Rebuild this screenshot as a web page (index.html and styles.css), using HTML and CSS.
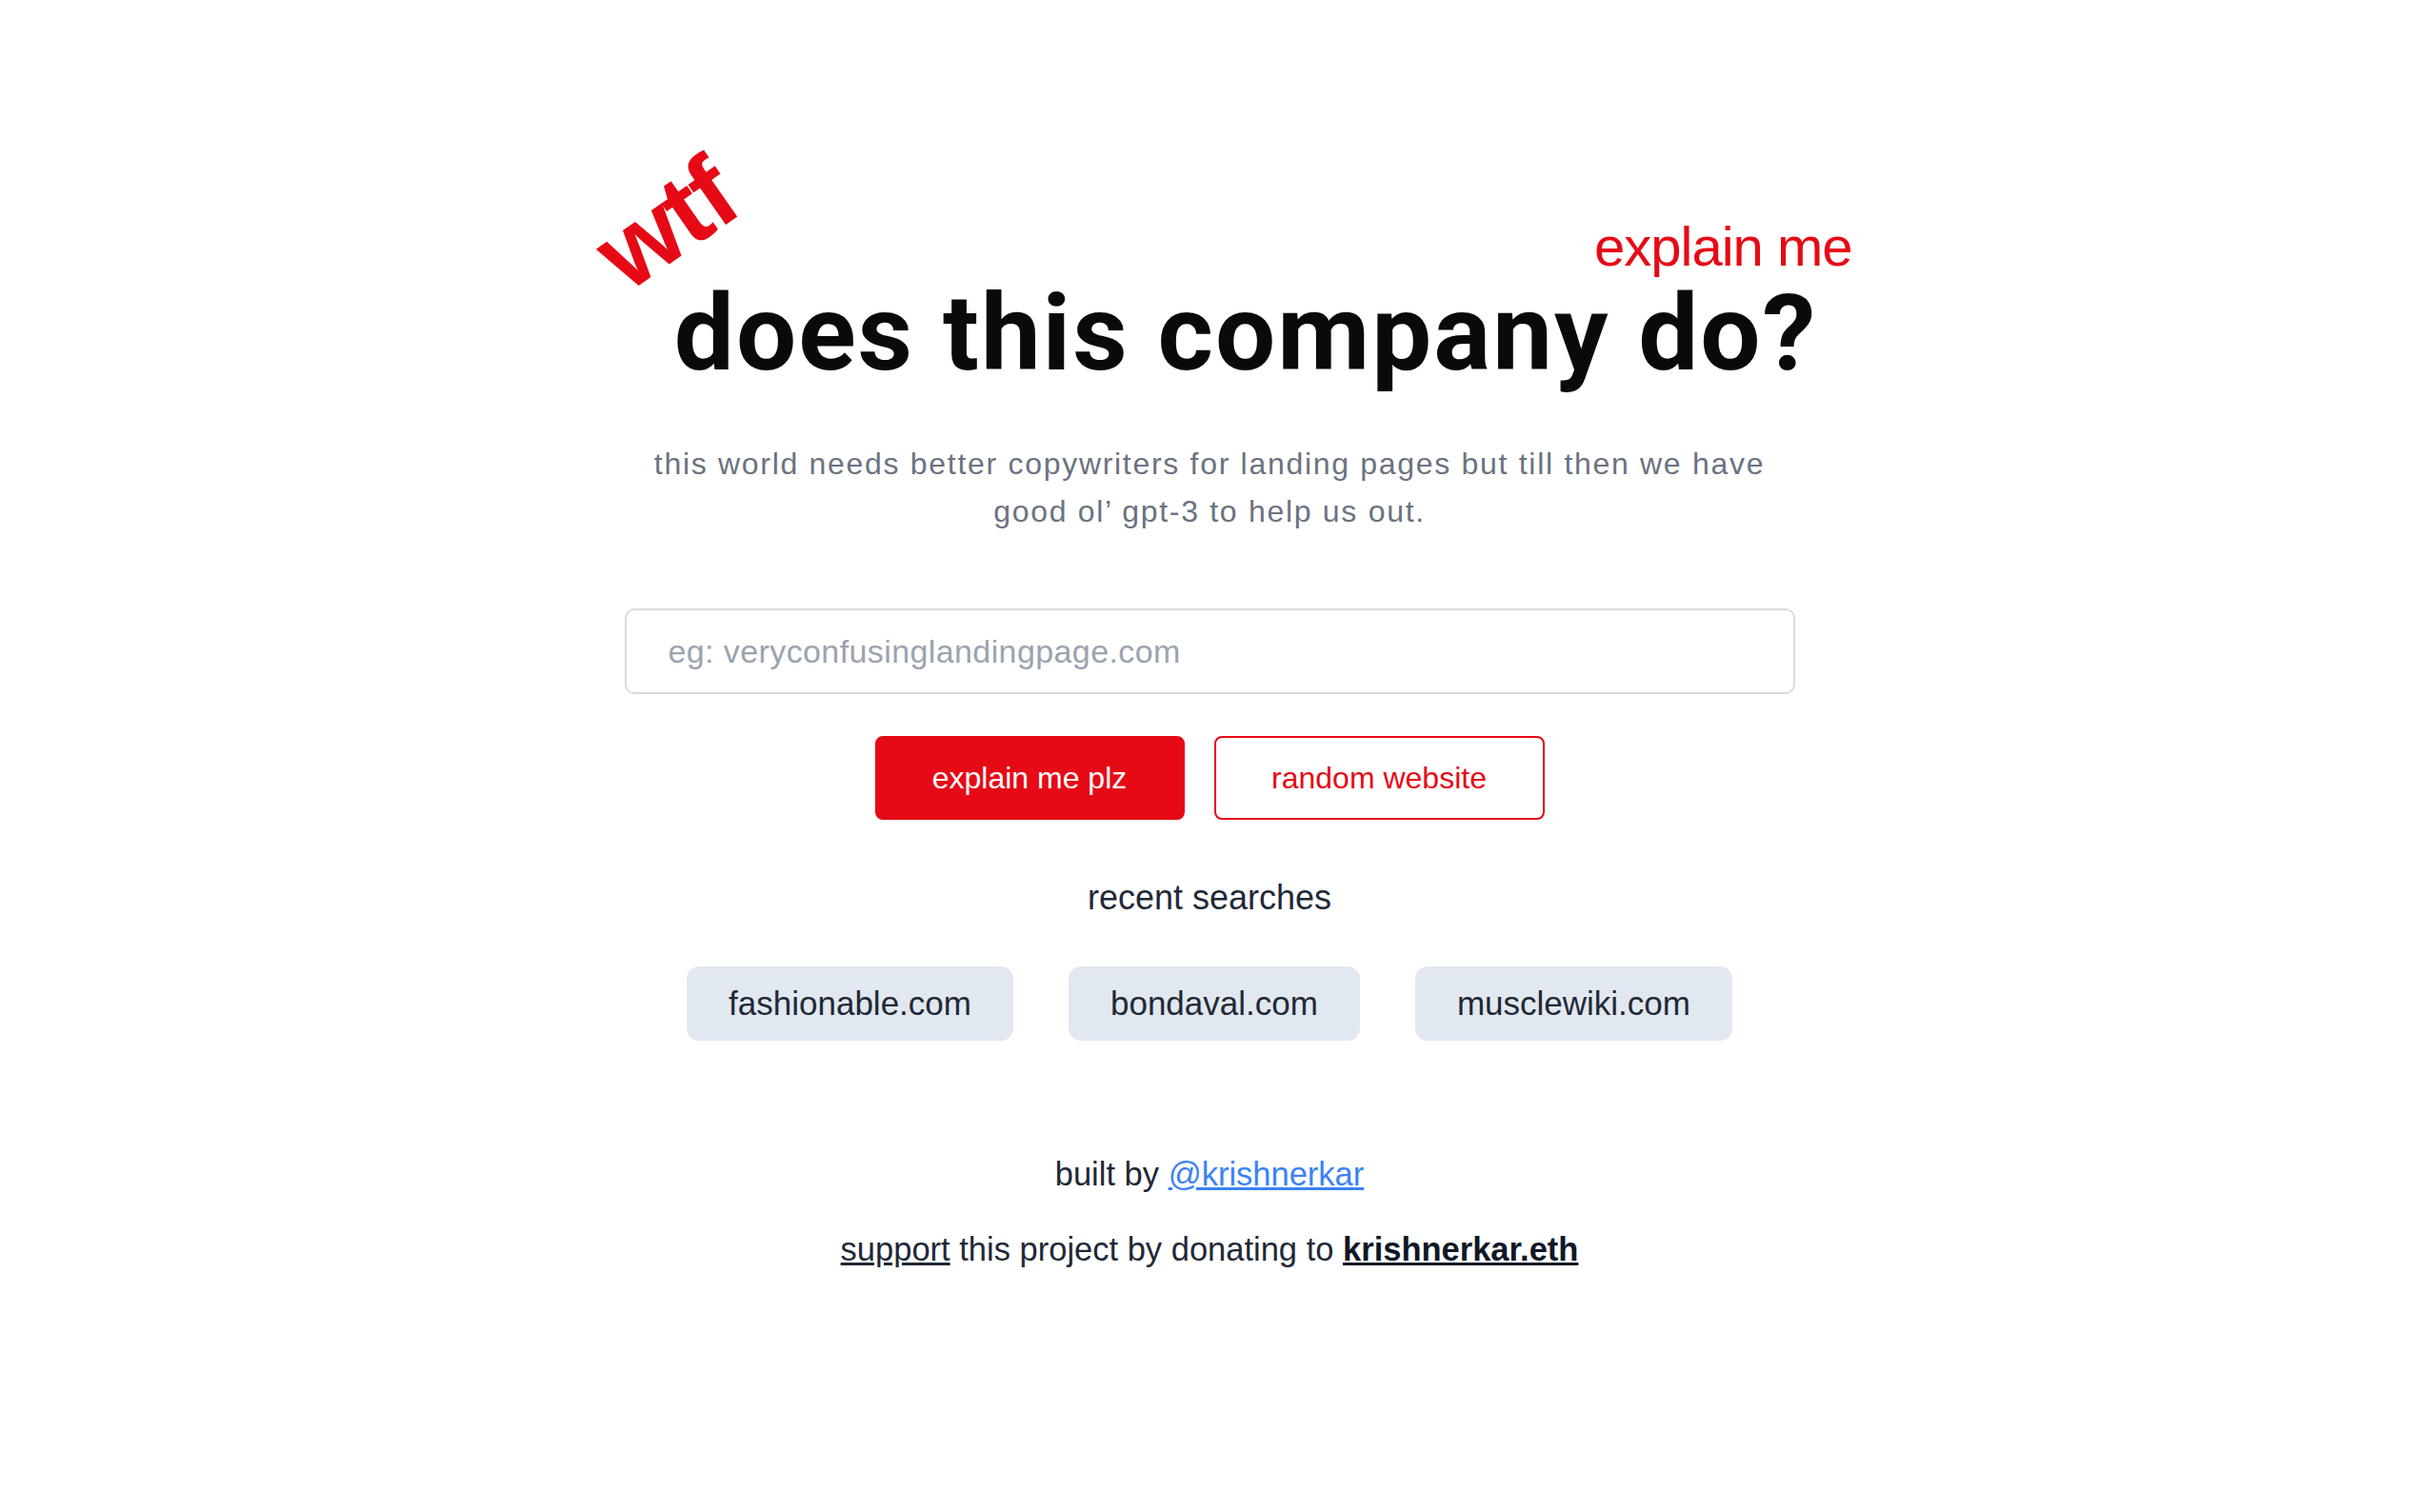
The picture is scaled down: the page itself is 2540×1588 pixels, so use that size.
FILE: index.html
```html
<!DOCTYPE html>
<html lang="en">
<head>
<meta charset="utf-8">
<title>wtf does this company do?</title>
<link rel="stylesheet" href="styles.css">
</head>
<body>
<main class="page">
  <div class="title">
    <span class="wtf">wtf</span>
    <span class="explain">explain me</span>
    <h1 class="headline">does this company do?</h1>
  </div>
  <p class="subtitle">this world needs better copywriters for landing pages but till then we have<br>good ol’ gpt-3 to help us out.</p>
  <input class="url-input" type="text" placeholder="eg: veryconfusinglandingpage.com">
  <div class="actions">
    <button class="btn btn-primary">explain me plz</button>
    <button class="btn btn-outline">random website</button>
  </div>
  <div class="recent-label">recent searches</div>
  <div class="chips">
    <span class="chip">fashionable.com</span>
    <span class="chip">bondaval.com</span>
    <span class="chip">musclewiki.com</span>
  </div>
  <div class="built">built by <a class="blue-link" href="#">@krishnerkar</a></div>
  <div class="support"><a class="plain-link" href="#">support</a> this project by donating to <a class="plain-link bold" href="#">krishnerkar.eth</a></div>
</main>
</body>
</html>
```

FILE: styles.css
```css
* { box-sizing: border-box; }
html, body { margin: 0; padding: 0; background: #ffffff; }
body {
  font-family: "Liberation Sans", Arial, sans-serif;
  color: #1f2937;
}
.page {
  display: flex;
  flex-direction: column;
  align-items: center;
  padding-top: 278px;
  min-height: 1588px;
}
.title {
  position: relative;
  width: 100%;
  text-align: center;
}
.headline {
  margin: 0;
  padding-left: 76px;
  font-family: Roboto, "Liberation Sans", sans-serif;
  font-size: 112px;
  line-height: 144px;
  font-weight: 700;
  letter-spacing: 2px;
  color: #0a0a0a;
}
.wtf {
  position: absolute;
  left: 624px;
  top: -97px;
  font-size: 108px;
  line-height: 108px;
  font-weight: 700;
  color: #e60a16;
  letter-spacing: -2px;
  transform: rotate(-35deg);
}
.explain {
  position: absolute;
  left: 1674px;
  top: -48px;
  font-size: 58px;
  line-height: 58px;
  color: #e60a16;
  letter-spacing: -1px;
}
.subtitle {
  margin: 40px 0 0;
  font-size: 32px;
  line-height: 50px;
  letter-spacing: 1.7px;
  color: #6b7280;
  text-align: center;
}
.url-input {
  margin-top: 77px;
  width: 1229px;
  height: 90px;
  border: 2px solid #d7dbe0;
  border-radius: 10px;
  padding: 0 44px;
  font-family: "Liberation Sans", Arial, sans-serif;
  font-size: 34px;
  letter-spacing: 0.4px;
  color: #1f2937;
  outline: none;
}
.url-input::placeholder { color: #9ca3af; }
.actions {
  margin-top: 44px;
  display: flex;
  gap: 31px;
}
.btn {
  height: 88px;
  border-radius: 8px;
  font-family: "Liberation Sans", Arial, sans-serif;
  font-size: 32px;
  cursor: pointer;
}
.btn-primary {
  width: 325px;
  background: #e60a16;
  border: 2px solid #e60a16;
  color: #ffffff;
}
.btn-outline {
  width: 347px;
  background: #ffffff;
  border: 2px solid #e60a16;
  color: #e60a16;
}
.recent-label {
  margin-top: 60px;
  font-size: 36px;
  line-height: 44px;
  color: #1f2937;
}
.chips {
  margin-top: 50px;
  display: flex;
  gap: 58px;
}
.chip {
  display: flex;
  align-items: center;
  height: 78px;
  padding: 0 44px;
  background: #e2e8f0;
  border-radius: 13px;
  font-size: 35px;
  color: #1f2937;
}
.built {
  margin-top: 118px;
  font-size: 34.5px;
  line-height: 44px;
  color: #1f2937;
}
.support {
  margin-top: 35px;
  font-size: 34.5px;
  line-height: 44px;
  color: #1f2937;
}
.blue-link { color: #3b82f6; text-decoration: underline; }
.plain-link { color: #1f2937; text-decoration: underline; }
.bold { font-weight: 700; color: #111827; }
```
